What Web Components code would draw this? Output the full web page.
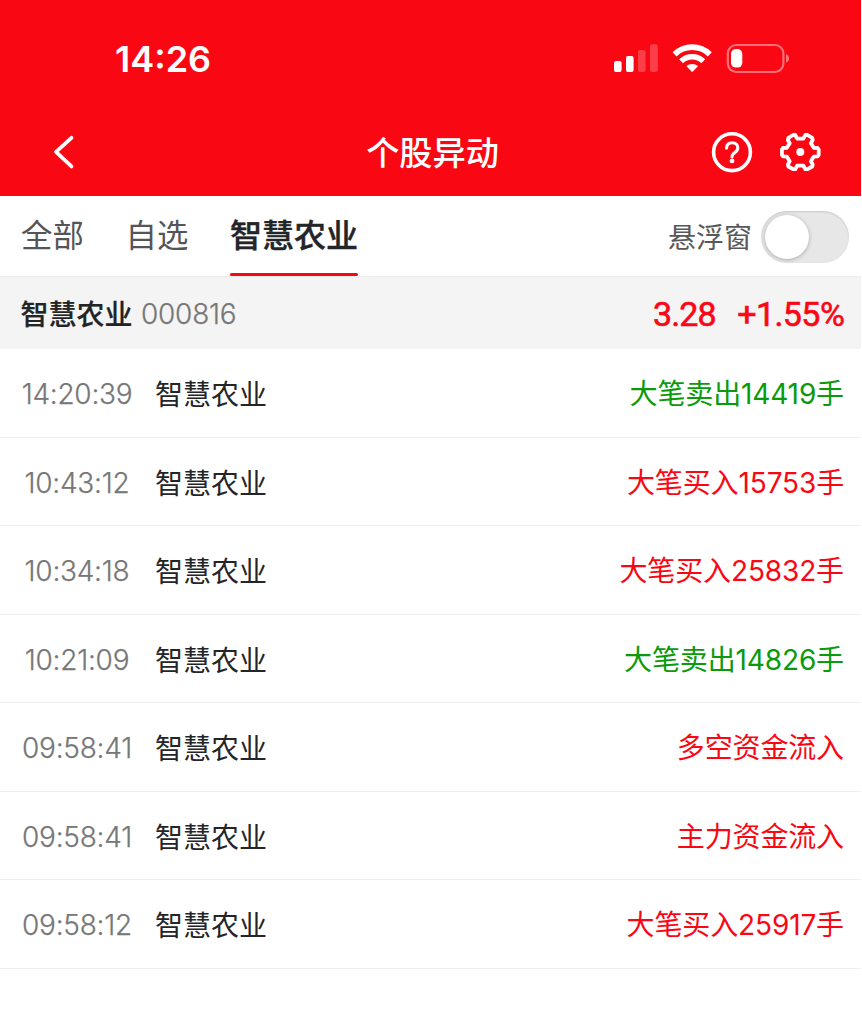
<!DOCTYPE html>
<html lang="zh-CN">
<head>
<meta charset="utf-8">
<title>个股异动</title>
<style>
html,body{margin:0;background:#fff}
body{font-family:Inter,"Noto Sans CJK SC",sans-serif;color:#222426;height:1024px;overflow:hidden}
</style>
</head>
<body>
<stock-app></stock-app>
<script>
const define = (name, html, setup) => customElements.define(name, class extends HTMLElement {
  constructor() {
    super();
    const t = document.createElement('template');
    t.innerHTML = html;
    this.attachShadow({mode: 'open'}).append(t.content.cloneNode(true));
  }
  connectedCallback() { if (setup) setup(this, this.shadowRoot); }
});

define('status-bar', `
<style>
:host{display:flex;height:107px;box-sizing:border-box;padding:37px 72px 0 115px;justify-content:space-between;color:#fff}
.time{font:570 36px/44px Inter,sans-serif}
svg{display:block;margin-top:3px}
</style>
<span class="time">14:26</span>
<svg width="177" height="36" viewBox="612 40 177 36" fill="#fff">
<rect x="614" y="61" width="7.6" height="11" rx="2"/><rect x="626" y="56" width="7.6" height="16" rx="2"/>
<g opacity=".22"><rect x="638" y="50" width="7.6" height="22" rx="2"/><rect x="650" y="44.3" width="7.8" height="27.7" rx="2"/></g>
<path d="M674.6 54.3A25.2 25.2 0 0 1 709.8 54.3" fill="none" stroke="#fff" stroke-width="5.8"/>
<path d="M681.1 61.2A16 16 0 0 1 703.3 61.2" fill="none" stroke="#fff" stroke-width="5.6"/>
<path d="M686.3 66.1A9.2 9.2 0 0 1 698.1 66.1L692.9 71.5Q692.2 72.1 691.5 71.5Z"/>
<rect x="727.8" y="45" width="55.6" height="27" rx="8.4" fill="none" stroke="#fff" stroke-width="2.2" opacity=".42"/>
<rect x="731" y="49" width="11.3" height="18.6" rx="4.8"/>
<path d="M786 54Q789 55.4 789 58.4T786 62.8Z" opacity=".45"/>
</svg>`);

define('title-bar', `
<style>
:host{display:grid;grid-template-columns:1fr auto 1fr;align-items:center;height:89px;color:#fff;padding:0 40px 0 52px}
.t{font:500 33.2px/48px "Noto Sans CJK SC",sans-serif;transform:translate(-4px,-.8px)}
svg{display:block}
.tools{display:flex;gap:26px;justify-self:end}
</style>
<svg width="24" height="36" viewBox="52 134 24 36"><path d="M71.5 137.8 56 151.8 71.5 166.4" fill="none" stroke="#fff" stroke-width="3.8" stroke-linecap="round" stroke-linejoin="round"/></svg>
<span class="t"><slot></slot></span>
<div class="tools">
<svg width="42" height="42" viewBox="711 131.2 42 42" fill="none" stroke="#fff"><circle cx="732" cy="152.4" r="18.4" stroke-width="3.6"/><path d="M726.5 148.3C726.7 144.9 728.8 142.9 732.2 142.9C735.6 142.9 737.8 145 737.8 148C737.8 150.2 736.7 151.4 734.9 152.7C732.9 154.1 732 155 732 157" stroke-width="3.1" stroke-linecap="round"/><circle cx="732" cy="161.1" r="2.4" fill="#fff" stroke="none"/></svg>
<svg width="42" height="42" viewBox="779.2 131.2 42 42"><path d="M793.2 135.2H795.4L797.4 138.8H803.6L805.6 135.2H807.8L812.4 138L812.9 140.2L811.1 143.4L814 148L817.8 148.2L818.9 149.7V155L817.8 156.5L814 156.8L811.1 161.4L812.9 164.6L812.4 166.7L807.8 169.4H805.6L803.6 165.9H797.4L795.4 169.4H793.2L788.6 166.7L788.1 164.6L789.9 161.4L787 156.8L783.2 156.5L782.1 155V149.7L783.2 148.2L787 148L789.9 143.4L788.1 140.2L788.6 138Z" fill="none" stroke="#fff" stroke-width="3.8" stroke-linejoin="round"/><circle cx="800.5" cy="152.3" r="4" fill="#fff"/></svg>
</div>`);

define('tab-item', `
<style>
:host{display:flex;flex-direction:column;justify-content:space-between;height:80px;font:400 31.4px/46px "Noto Sans CJK SC",sans-serif;color:#555557}
:host([active]){font-size:32px;font-weight:500;color:#242528;-webkit-text-stroke:.4px #242528}
span{margin-top:14.5px}
i{display:block;height:3.5px;border-radius:2px}
:host([active]) span{margin-top:14px}
:host([active]) i{background:#fa0714}
</style><span><slot></slot></span><i></i>`);

define('toggle-switch', `
<style>
:host{display:flex;box-sizing:border-box;width:88px;height:52px;border-radius:26px;background:#e7e7e7;padding:4px;box-shadow:inset 0 1px 2px #0002}
i{width:44px;height:44px;border-radius:50%;background:#fff;box-shadow:0 1px 4px #0004}
</style><i></i>`);

define('tab-bar', `
<style>
:host{display:flex;height:80px;padding:0 12px 0 21px;border-bottom:1px solid #ececec;box-sizing:content-box}
nav{display:flex;gap:41.7px;flex:1}
.float{display:flex;gap:9px;align-items:center;font:400 28px/40px "Noto Sans CJK SC",sans-serif;color:#58585a}
toggle-switch{margin-top:1px}
</style><nav><slot></slot></nav><div class="float"><span>悬浮窗</span><toggle-switch></toggle-switch></div>`);

define('stock-summary', `
<style>
:host{display:flex;align-items:center;height:72px;box-sizing:border-box;background:#f4f4f4;padding:0 17px 0 20.5px}
b{font:500 28px/40px "Noto Sans CJK SC",sans-serif;margin-top:-1px;-webkit-text-stroke:.2px #222426}
.code{font:350 28px/40px Inter,sans-serif;color:#777;margin:1px 0 0 8.5px;letter-spacing:-.25px;-webkit-text-stroke:.25px #777}
.price{margin-left:auto;display:flex;gap:21.5px;font:400 34px/40px Roboto,sans-serif;color:#fa0714;-webkit-text-stroke:.6px #fa0714;margin-top:2px}
.p{letter-spacing:-.9px}.c{letter-spacing:-.6px;margin-right:-.2px}
</style><b>智慧农业</b><span class="code">000816</span><div class="price"><span class="p">3.28</span><span class="c">+1.55%</span></div>`);

define('event-row', `
<style>
:host{display:flex;align-items:center;height:88.5px;box-sizing:border-box;border-bottom:1.5px solid #efefef;padding:2px 17px 0 17px;font:400 28px/40px "Noto Sans CJK SC",sans-serif}
time{width:120px;text-align:center;font:360 28px/40px Inter,sans-serif;letter-spacing:-.25px;color:#777;-webkit-text-stroke:.25px #777}
.n{margin-left:18px;margin-top:-2px;color:#242528}
.m{margin-left:auto;font-family:Inter,"Noto Sans CJK SC",sans-serif;letter-spacing:-.13px;color:#fa0714}
:host([sell]) .m{color:#0a9a0a}
</style><time></time><span class="n">智慧农业</span><span class="m"><slot></slot></span>`,
(el, root) => { root.querySelector('time').textContent = el.getAttribute('time'); });

define('stock-app', `
<style>:host{display:block;width:861px}header{background:#fa0714;height:196.4px}</style>
<header><status-bar></status-bar><title-bar>个股异动</title-bar></header>
<tab-bar><tab-item>全部</tab-item><tab-item>自选</tab-item><tab-item active>智慧农业</tab-item></tab-bar>
<stock-summary></stock-summary>
<main>
<event-row time="14:20:39" sell>大笔卖出14419手</event-row>
<event-row time="10:43:12">大笔买入15753手</event-row>
<event-row time="10:34:18">大笔买入25832手</event-row>
<event-row time="10:21:09" sell>大笔卖出14826手</event-row>
<event-row time="09:58:41">多空资金流入</event-row>
<event-row time="09:58:41">主力资金流入</event-row>
<event-row time="09:58:12">大笔买入25917手</event-row>
</main>`);
</script>
</body>
</html>
